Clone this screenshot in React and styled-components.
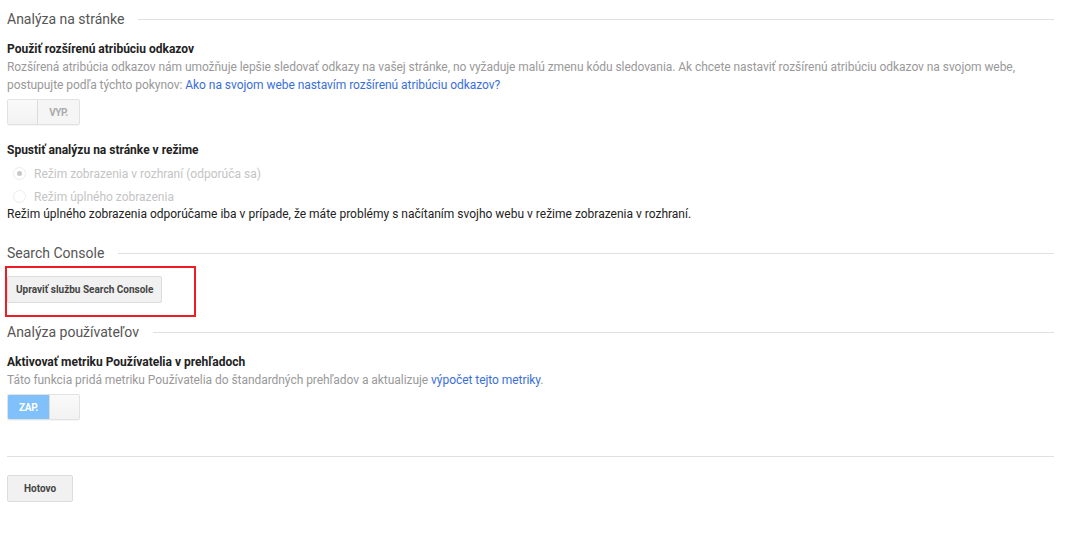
import React from "react";
import styled, { createGlobalStyle } from "styled-components";

const GlobalStyle = createGlobalStyle`
  body {
    margin: 0;
    background: #fff;
    font-family: Roboto, "Liberation Sans", Arial, sans-serif;
    color: #222;
  }
`;

const Page = styled.div`
  width: 1047px;
  padding: 8px 0 0 7px;
`;

const SectionHead = styled.div`
  display: flex;
  align-items: center;
  gap: 14px;
  height: 22px;
  font-size: 14px;
  font-weight: 400;
  color: #555;
  margin-top: ${(p) => p.top || 0}px;

  &::after {
    content: "";
    flex: 1;
    height: 1px;
    background: #e0e0e0;
  }
`;

const Label = styled.div`
  font-size: 12px;
  font-weight: 700;
  color: #222;
  line-height: 18px;
  margin-top: ${(p) => p.top || 0}px;
`;

const Desc = styled.div`
  font-size: 12px;
  color: #999;
  line-height: 18px;
  letter-spacing: -0.05px;
`;

const Link = styled.a`
  color: #3a6fd8;
  text-decoration: none;
`;

const Toggle = styled.div`
  display: flex;
  width: 73px;
  height: 26px;
  margin-top: ${(p) => p.top || 0}px;
  border-radius: 2px;
  box-sizing: border-box;
  border: 1px solid #e2e2e2;
  overflow: hidden;
  box-shadow: 0 1px 0 rgba(0, 0, 0, 0.04);
`;

const ToggleText = styled.div`
  flex: 1;
  display: flex;
  align-items: center;
  justify-content: center;
  font-size: 10px;
  font-weight: 700;
  letter-spacing: -0.4px;
  color: ${(p) => (p.on ? "#fff" : "#aaa")};
  background: ${(p) => (p.on ? "#80c1fb" : "#f5f5f5")};
`;

const Knob = styled.div`
  width: 29px;
  background: linear-gradient(#fafafa, #f2f2f2);
  border-left: ${(p) => (p.left ? "none" : "1px solid #dcdcdc")};
  border-right: ${(p) => (p.left ? "1px solid #dcdcdc" : "none")};
`;

const RadioGroup = styled.div`
  margin-top: 3px;
`;

const RadioRow = styled.div`
  display: flex;
  align-items: center;
  gap: 8px;
  height: 23px;
  padding-left: 6px;
  font-size: 12px;
  color: #c4c4c4;
`;

const RadioCircle = styled.span`
  position: relative;
  width: 13px;
  height: 13px;
  border-radius: 50%;
  border: 1px solid #ececec;
  box-sizing: border-box;
  background: #fff;

  &::after {
    content: "";
    display: ${(p) => (p.checked ? "block" : "none")};
    position: absolute;
    left: 3px;
    top: 3px;
    width: 5px;
    height: 5px;
    border-radius: 50%;
    background: #c8c8c8;
  }
`;

const Note = styled.div`
  font-size: 12px;
  color: #222;
  line-height: 18px;
  margin-top: -3px;
`;

const Highlight = styled.div`
  width: 191px;
  height: 51px;
  margin: 2px 0 0 -2px;
  box-sizing: border-box;
  border: 2px solid #ee1c24;
  padding: 8px 0 0 0;
`;

const Button = styled.button`
  display: block;
  height: 27px;
  padding: 0 ${(p) => p.pad || 8}px;
  border: 1px solid #dcdcdc;
  border-radius: 2px;
  background: #f1f1f1;
  font-family: Roboto, "Liberation Sans", Arial, sans-serif;
  font-size: 10px;
  font-weight: 700;
  color: #444;
  cursor: pointer;
  margin-top: ${(p) => p.top || 0}px;
`;

const Rule = styled.hr`
  border: 0;
  height: 1px;
  background: #e0e0e0;
  margin: 36px 0 0;
`;

export default function App() {
  return (
    <>
      <GlobalStyle />
      <Page>
        <SectionHead>Analýza na stránke</SectionHead>

        <Label top={10}>Použiť rozšírenú atribúciu odkazov</Label>
        <Desc>
          Rozšírená atribúcia odkazov nám umožňuje lepšie sledovať odkazy na vašej stránke, no vyžaduje malú zmenu kódu
          sledovania. Ak chcete nastaviť rozšírenú atribúciu odkazov na svojom webe, postupujte podľa týchto pokynov:{" "}
          <Link href="#">Ako na svojom webe nastavím rozšírenú atribúciu odkazov?</Link>
        </Desc>
        <Toggle top={5}>
          <Knob left />
          <ToggleText>VYP.</ToggleText>
        </Toggle>

        <Label top={16}>Spustiť analýzu na stránke v režime</Label>
        <RadioGroup>
          <RadioRow>
            <RadioCircle checked />
            Režim zobrazenia v rozhraní (odporúča sa)
          </RadioRow>
          <RadioRow>
            <RadioCircle />
            Režim úplného zobrazenia
          </RadioRow>
        </RadioGroup>
        <Note>Režim úplného zobrazenia odporúčame iba v prípade, že máte problémy s načítaním svojho webu v režime zobrazenia v rozhraní.</Note>

        <SectionHead top={19}>Search Console</SectionHead>
        <Highlight>
          <Button>Upraviť službu Search Console</Button>
        </Highlight>

        <SectionHead top={4}>Analýza používateľov</SectionHead>
        <Label top={10}>Aktivovať metriku Používatelia v prehľadoch</Label>
        <Desc>
          Táto funkcia pridá metriku Používatelia do štandardných prehľadov a aktualizuje{" "}
          <Link href="#">výpočet tejto metriky</Link>.
        </Desc>
        <Toggle top={5}>
          <ToggleText on>ZAP.</ToggleText>
          <Knob />
        </Toggle>

        <Rule />
        <Button pad={16} top={18}>Hotovo</Button>
      </Page>
    </>
  );
}
